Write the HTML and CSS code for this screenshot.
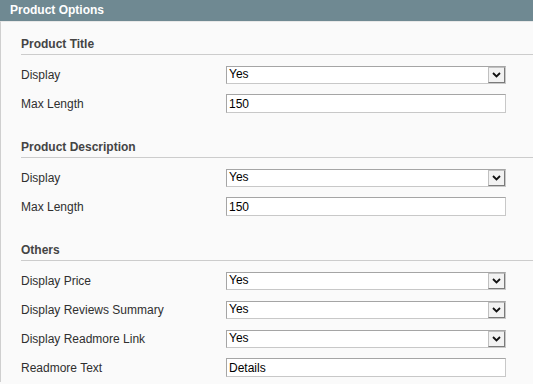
FILE: index.html
```html
<!DOCTYPE html>
<html>
<head>
    <title>Product Options</title>
    <link rel="stylesheet" href="styles.css">
</head>
<body>
    <div class="panel">
        <div class="panel-head">Product Options</div>
        <div class="panel-body">

            <div class="section">
                <h4 class="section-title">Product Title</h4>
                <div class="row">
                    <label class="label">Display</label>
                    <div class="select"><span class="value">Yes</span><span class="arrow"><svg width="9" height="6" viewBox="0 0 9 6"><path d="M1 1 L4.5 4.5 L8 1" fill="none" stroke="#111" stroke-width="1.8"/></svg></span></div>
                </div>
                <div class="row">
                    <label class="label">Max Length</label>
                    <input class="text" type="text" value="150">
                </div>
            </div>

            <div class="section">
                <h4 class="section-title">Product Description</h4>
                <div class="row">
                    <label class="label">Display</label>
                    <div class="select"><span class="value">Yes</span><span class="arrow"><svg width="9" height="6" viewBox="0 0 9 6"><path d="M1 1 L4.5 4.5 L8 1" fill="none" stroke="#111" stroke-width="1.8"/></svg></span></div>
                </div>
                <div class="row">
                    <label class="label">Max Length</label>
                    <input class="text" type="text" value="150">
                </div>
            </div>

            <div class="section last">
                <h4 class="section-title">Others</h4>
                <div class="row">
                    <label class="label">Display Price</label>
                    <div class="select"><span class="value">Yes</span><span class="arrow"><svg width="9" height="6" viewBox="0 0 9 6"><path d="M1 1 L4.5 4.5 L8 1" fill="none" stroke="#111" stroke-width="1.8"/></svg></span></div>
                </div>
                <div class="row">
                    <label class="label">Display Reviews Summary</label>
                    <div class="select"><span class="value">Yes</span><span class="arrow"><svg width="9" height="6" viewBox="0 0 9 6"><path d="M1 1 L4.5 4.5 L8 1" fill="none" stroke="#111" stroke-width="1.8"/></svg></span></div>
                </div>
                <div class="row">
                    <label class="label">Display Readmore Link</label>
                    <div class="select"><span class="value">Yes</span><span class="arrow"><svg width="9" height="6" viewBox="0 0 9 6"><path d="M1 1 L4.5 4.5 L8 1" fill="none" stroke="#111" stroke-width="1.8"/></svg></span></div>
                </div>
                <div class="row">
                    <label class="label">Readmore Text</label>
                    <input class="text" type="text" value="Details">
                </div>
            </div>

        </div>
    </div>
</body>
</html>
```

FILE: styles.css
```css
body {
    margin: 0;
    font-family: "Liberation Sans", Arial, sans-serif;
    font-size: 12px;
    background-color: #fafafa;
}
.panel-head {
    height: 21px;
    line-height: 20px;
    padding-left: 10px;
    background-color: #6f8992;
    color: #fff;
    font-weight: bold;
}
.panel-body {
    background-color: #fafafa;
    border-top: 1px solid #e8e8e8;
    border-left: 1px solid #cfcfcf;
    padding: 14px 0 0 20px;
}
.section {
    margin-bottom: 21px;
}
.section.last {
    margin-bottom: 0;
}
.section-title {
    margin: 0 0 5px;
    padding-bottom: 2px;
    line-height: 16px;
    font-size: 12px;
    color: #444;
    border-bottom: 1px solid #cccccc;
}
.row {
    display: flex;
    align-items: center;
    height: 29px;
}
.label {
    width: 205px;
    color: #2f2f2f;
}
.select {
    display: flex;
    align-items: stretch;
    box-sizing: border-box;
    width: 280px;
    height: 18px;
    border: 1px solid #aaa;
    border-color: #a5a5a5 #c8c8c8 #c8c8c8 #a5a5a5;
    background-color: #fff;
}
.select .value {
    flex: 1;
    padding-left: 2px;
    line-height: 15px;
    color: #000;
}
.select .arrow {
    display: flex;
    align-items: center;
    justify-content: center;
    width: 17px;
    box-sizing: border-box;
    border: 1px solid #8a8a8a;
    border-color: #c0c0c0 #7a7a7a #7a7a7a #c0c0c0;
    background-color: #f2f2f2;
}
.text {
    box-sizing: border-box;
    width: 280px;
    height: 19px;
    margin: 0;
    padding: 0 2px;
    border: 1px solid #aaa;
    border-color: #a5a5a5 #c8c8c8 #c8c8c8 #a5a5a5;
    background-color: #fff;
    font-family: "Liberation Sans", Arial, sans-serif;
    font-size: 12px;
    color: #000;
    outline: none;
}
```
